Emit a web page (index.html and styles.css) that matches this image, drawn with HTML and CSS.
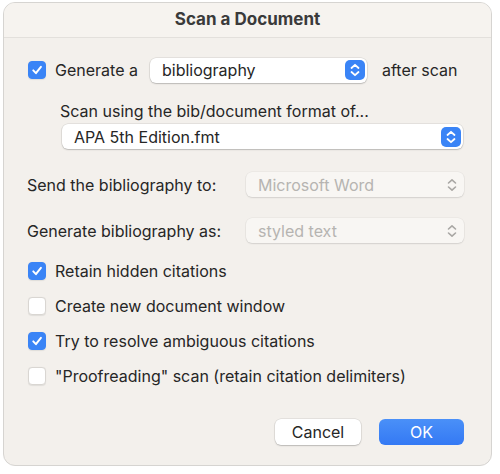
FILE: index.html
```html
<!DOCTYPE html>
<html>
<head>
<meta charset="utf-8">
<link rel="stylesheet" href="styles.css">
</head>
<body>
<div class="window">
  <div class="titlebar">Scan a Document</div>
  <div class="content">
    <div class="row row-gen">
      <span class="cb on"><svg viewBox="0 0 18 18"><path d="M4.8 9.4 L7.8 12.6 L13.4 5.4" /></svg></span>
      <span class="lbl">Generate a</span>
      <div class="popup pop-bib"><span>bibliography</span><span class="step"><svg viewBox="0 0 20 20"><path d="M6.5 8 L10 4.8 L13.5 8 M6.5 12 L10 15.2 L13.5 12"/></svg></span></div>
      <span class="lbl">after scan</span>
    </div>
    <div class="sub">Scan using the bib/document format of...</div>
    <div class="popup pop-apa"><span>APA 5th Edition.fmt</span><span class="step"><svg viewBox="0 0 20 20"><path d="M6.5 8 L10 4.8 L13.5 8 M6.5 12 L10 15.2 L13.5 12"/></svg></span></div>
    <div class="row row-send">
      <span class="lbl wide">Send the bibliography to:</span>
      <div class="popup dis"><span>Microsoft Word</span><span class="step"><svg viewBox="0 0 20 20"><path d="M6.5 8 L10 4.8 L13.5 8 M6.5 12 L10 15.2 L13.5 12"/></svg></span></div>
    </div>
    <div class="row row-as">
      <span class="lbl wide">Generate bibliography as:</span>
      <div class="popup dis"><span>styled text</span><span class="step"><svg viewBox="0 0 20 20"><path d="M6.5 8 L10 4.8 L13.5 8 M6.5 12 L10 15.2 L13.5 12"/></svg></span></div>
    </div>
    <div class="checks">
      <div class="row chk"><span class="cb on"><svg viewBox="0 0 18 18"><path d="M4.8 9.4 L7.8 12.6 L13.4 5.4" /></svg></span><span class="lbl">Retain hidden citations</span></div>
      <div class="row chk"><span class="cb"></span><span class="lbl">Create new document window</span></div>
      <div class="row chk"><span class="cb on"><svg viewBox="0 0 18 18"><path d="M4.8 9.4 L7.8 12.6 L13.4 5.4" /></svg></span><span class="lbl">Try to resolve ambiguous citations</span></div>
      <div class="row chk"><span class="cb"></span><span class="lbl">"Proofreading" scan (retain citation delimiters)</span></div>
    </div>
    <div class="buttons">
      <button class="btn cancel">Cancel</button>
      <button class="btn ok">OK</button>
    </div>
  </div>
</div>
</body>
</html>
```

FILE: styles.css
```css
html, body {
  margin: 0;
  padding: 0;
  background: #ffffff;
}
body {
  font-family: Inter, "Noto Sans", sans-serif;
  font-size: 16px;
  color: #262626;
  padding: 2px 0 0 3px;
}
.window {
  width: 487px;
  height: 462px;
  border: 1px solid #d6d4d1;
  border-radius: 12px;
  background: #f3f0ec;
  overflow: hidden;
  display: flex;
  flex-direction: column;
}
.titlebar {
  height: 34px;
  flex: none;
  background: #f6f3ef;
  border-bottom: 1px solid #e3e0dc;
  text-align: center;
  line-height: 32px;
  font-weight: 700;
  font-size: 17px;
  color: #3a3a3a;
}
.content {
  display: flex;
  flex-direction: column;
  padding: 19px 0 0 24px;
}
.row {
  display: flex;
  align-items: center;
}
.cb {
  width: 18px;
  height: 18px;
  box-sizing: border-box;
  border-radius: 4px;
  background: #ffffff;
  border: 1px solid #d9d6d2;
  box-shadow: 0 0.5px 1px rgba(0,0,0,0.08);
  flex: none;
  display: flex;
  align-items: center;
  justify-content: center;
  margin-left: 0;
}
.cb.on {
  background: #3a84f6;
  border-color: #3a84f6;
}
.cb svg {
  width: 18px;
  height: 18px;
  fill: none;
  stroke: #ffffff;
  stroke-width: 2.2;
  stroke-linecap: round;
  stroke-linejoin: round;
}
.lbl {
  white-space: nowrap;
}
.row-gen {
  height: 26px;
}
.row-gen .cb {
  margin-right: 9px;
}
.popup {
  display: flex;
  align-items: center;
  justify-content: space-between;
  box-sizing: border-box;
  height: 25px;
  background: #ffffff;
  border-radius: 6px;
  box-shadow: 0 0 0 0.5px rgba(0,0,0,0.12), 0 1px 1.5px rgba(0,0,0,0.18);
  padding: 0 2px 0 12px;
  color: #262626;
}
.pop-bib {
  width: 217px;
  margin: 0 15px 0 12px;
}
.step {
  width: 20px;
  height: 20px;
  border-radius: 5px;
  background: #3a84f6;
  display: flex;
  align-items: center;
  justify-content: center;
}
.step svg {
  width: 20px;
  height: 20px;
  fill: none;
  stroke: #ffffff;
  stroke-width: 1.8;
  stroke-linecap: round;
  stroke-linejoin: round;
}
.sub {
  margin: 17px 0 0 32px;
  height: 22px;
  line-height: 22px;
}
.pop-apa {
  margin: 2px 0 0 34px;
  width: 401px;
}
.row-send {
  margin-top: 23px;
  height: 25px;
}
.row-as {
  margin-top: 21px;
  height: 25px;
}
.lbl.wide {
  width: 219px;
  margin-left: -1px;
}
.dis {
  width: 218px;
  background: #f8f6f3;
  color: #b6b4b1;
  box-shadow: 0 0 0 0.5px rgba(0,0,0,0.06), 0 1px 1.5px rgba(0,0,0,0.1);
}
.dis .step {
  background: transparent;
}
.dis .step svg {
  stroke: #a9a7a4;
  stroke-width: 1.6;
}
.checks {
  margin-top: 18px;
  display: flex;
  flex-direction: column;
  gap: 15px;
}
.chk {
  height: 20px;
}
.chk .cb {
  margin-right: 9px;
}
.buttons {
  display: flex;
  justify-content: flex-end;
  gap: 18px;
  margin-top: 33px;
  padding-right: 27px;
}
.btn {
  font-family: inherit;
  font-size: 16px;
  height: 26px;
  border: none;
  border-radius: 6px;
  padding: 0;
  color: #262626;
}
.cancel {
  width: 86px;
  background: #ffffff;
  box-shadow: 0 0 0 0.5px rgba(0,0,0,0.12), 0 1px 1.5px rgba(0,0,0,0.18);
}
.ok {
  width: 85px;
  background: linear-gradient(#4a90f8, #3479f4);
  color: #ffffff;
}
```
